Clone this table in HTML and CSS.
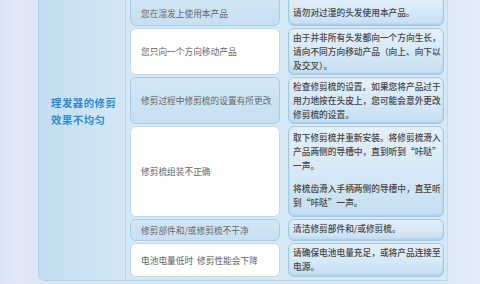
FILE: index.html
```html
<!DOCTYPE html>
<html lang="zh-Hans">
<head>
<meta charset="utf-8">
<link rel="stylesheet" href="styles.css">
</head>
<body>
<div class="page">
  <div class="strip"></div>
  <div class="panel">
    <div class="label-col">
      <div class="label">理发器的修剪<br>效果不均匀</div>
    </div>
    <div class="table">
      <div class="cause blue">您在湿发上使用本产品</div>
      <div class="sol">请勿对过湿的头发使用本产品。</div>

      <div class="cause white">您只向一个方向移动产品</div>
      <div class="sol">由于并非所有头发都向一个方向生长，请向不同方向移动产品（向上、向下以及交叉）。</div>

      <div class="cause blue">修剪过程中修剪梳的设置有所更改</div>
      <div class="sol">检查修剪梳的设置。如果您将产品过于用力地按在头皮上，您可能会意外更改修剪梳的设置。</div>

      <div class="cause white">修剪梳组装不正确</div>
      <div class="sol tall"><p>取下修剪梳并重新安装。将修剪梳滑入产品两侧的导槽中，直到听到“咔哒”一声。</p><p>将梳齿滑入手柄两侧的导槽中，直至听到“咔哒”一声。</p></div>

      <div class="cause blue">修剪部件和/或修剪梳不干净</div>
      <div class="sol">清洁修剪部件和/或修剪梳。</div>

      <div class="cause white">电池电量低时&nbsp;&nbsp;修剪性能会下降</div>
      <div class="sol">请确保电池电量充足，或将产品连接至电源。</div>
    </div>
  </div>
  <div class="side"></div>
</div>
</body>
</html>
```

FILE: styles.css
```css
* { box-sizing: border-box; }
html, body { margin: 0; padding: 0; }
body {
  width: 480px;
  height: 284px;
  overflow: hidden;
  background: #dde8f6;
  font-family: "Noto Sans CJK SC", "Noto Sans", sans-serif;
}
.page {
  display: flex;
  height: 284px;
  align-items: flex-start;
}
.strip {
  width: 38px;
  height: 284px;
  background: linear-gradient(90deg, #dae3f6 0%, #e1e8f7 45%, #dee7f6 100%);
  flex: none;
}
.panel {
  width: 410px;
  height: 281px;
  flex: none;
  display: flex;
  border-left: 1px solid #b2cfe6;
  border-bottom: 1px solid #b8d3e8;
  border-right: 1px solid #c4dbee;
  border-bottom-left-radius: 7px;
  background: #d5e8f5;
  overflow: hidden;
}
.label-col {
  width: 87px;
  flex: none;
  border-right: 1px solid #b6d3e9;
  background: linear-gradient(90deg, #c3ddf1 0%, #cde3f3 60%, #d4e7f4 100%);
  padding: 94px 0 0 12px;
}
.label {
  color: #2b8cd0;
  font-size: 10.4px;
  font-weight: 700;
  letter-spacing: 0.5px;
  line-height: 17px;
}
.table {
  margin-top: -4px;
  margin-left: 4px;
  width: 314px;
  display: grid;
  grid-template-columns: 150px 156px;
  grid-template-rows: 30px 47px 47px 91px 22px 34px;
  column-gap: 8px;
  row-gap: 2px;
}
.cause {
  border-radius: 6px;
  font-size: 8.7px;
  color: #666666;
  font-weight: 400;
  padding-left: 10px;
  display: flex;
  align-items: center;
  white-space: nowrap;
}
.cause.blue {
  background: linear-gradient(180deg, #d3e7f5 0%, #c6dff1 100%);
  border: 1px solid #a9cbe4;
}
.cause.white {
  background: #ffffff;
  border: 1px solid #c3d9ea;
}
.table > .cause:first-child { padding-top: 4px; }
.table > .cause:first-child + .sol { padding-top: 9px; }
.sol {
  border-radius: 6px;
  background: linear-gradient(180deg, #e4f0fa 0%, #d5e8f6 55%, #c5def1 100%);
  border: 1px solid #a3c8e3;
  box-shadow: inset 0 -1px 2px rgba(120, 170, 210, 0.35);
  font-size: 8.7px;
  line-height: 14px;
  color: #444444;
  font-weight: 500;
  padding: 2px 0 0 4px;
}
.sol.tall { padding-top: 4px; font-feature-settings: "fwid" 1; }
.sol p { margin: 0 0 9px 0; }
.side {
  flex: 1;
  height: 284px;
  background: linear-gradient(90deg, #dfeaf7 0%, #e4edf8 100%);
}
```
